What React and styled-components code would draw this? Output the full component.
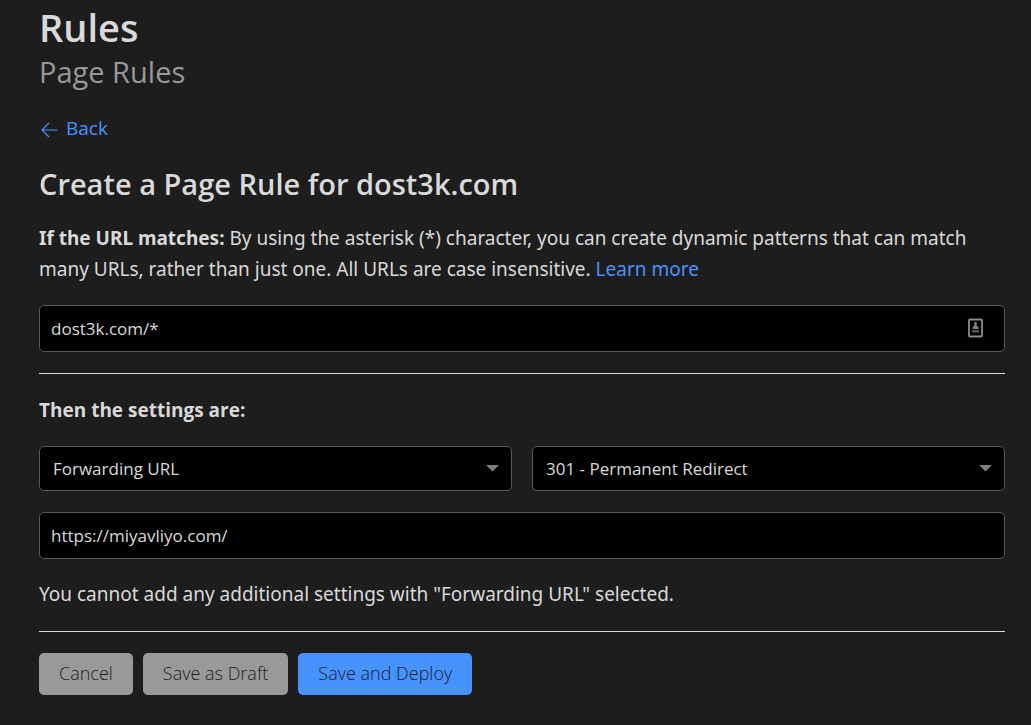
import React from 'react';
import styled, { createGlobalStyle } from 'styled-components';

const GlobalStyle = createGlobalStyle`
  * {
    box-sizing: border-box;
  }

  body {
    margin: 0;
    background: #1d1d1d;
    color: #d9d9d9;
    font-family: 'Segoe UI', 'Open Sans', 'Noto Sans', sans-serif;
    font-size: 19px;
    line-height: 31px;
  }
`;

const Page = styled.main`
  padding: 2px 26px 30px 39px;
`;

const Title = styled.h1`
  margin: 0;
  font-size: 38px;
  font-weight: 600;
  line-height: 50px;
`;

const Subtitle = styled.p`
  margin: 0;
  color: #999;
  font-size: 29px;
  line-height: 40px;
`;

const Link = styled.a`
  color: #4693ff;
  text-decoration: none;
`;

const BackLink = styled(Link)`
  display: inline-flex;
  align-items: center;
  gap: 7px;
  margin-top: 21px;
`;

const Heading = styled.h2`
  margin: 17px 0 19px;
  font-size: 29px;
  font-weight: 600;
  line-height: 40px;
`;

const Text = styled.p`
  margin: ${props => props.$top || '0'} 0 0;
  font-family: 'Segoe UI', 'Noto Sans', sans-serif;
`;

const Label = styled.label`
  font-weight: 700;
`;

const SettingsTitle = styled.h3`
  margin: 0 0 20px;
  font-size: 19px;
  font-weight: 700;
  line-height: 31px;
`;

const Field = styled.div`
  display: flex;
  align-items: center;
  height: 47px;
  margin-top: ${props => props.$top};
  padding-right: 20px;
  background: #000;
  border: 1px solid #595959;
  border-radius: 5px;
`;

const Input = styled.input`
  flex: 1;
  min-width: 0;
  height: 100%;
  padding: 0 11px;
  background: transparent;
  border: 0;
  outline: 0;
  color: #d9d9d9;
  font: inherit;
  font-size: 17px;
`;

const Divider = styled.hr`
  height: 1px;
  margin: 21px 0;
  background: #d9d9d9;
  border: 0;
`;

const Columns = styled.div`
  display: grid;
  grid-template-columns: 1fr 1fr;
  gap: 20px;
`;

const SelectBox = styled.div`
  display: grid;
  align-items: center;

  > * {
    grid-area: 1 / 1;
  }

  > svg {
    justify-self: end;
    margin-right: 13px;
    pointer-events: none;
  }
`;

const Select = styled.select`
  width: 100%;
  height: 45px;
  padding: 0 36px 0 13px;
  appearance: none;
  background: #000;
  border: 1px solid #595959;
  border-radius: 5px;
  outline: 0;
  color: #d9d9d9;
  font: inherit;
  font-size: 17px;
`;

const Actions = styled.div`
  display: flex;
  gap: 10px;
`;

const Button = styled.button`
  height: 42px;
  padding: 0 20px;
  background: ${props => (props.$primary ? '#4693ff' : '#999')};
  border: 0;
  border-radius: 5px;
  color: #1d1d1d;
  font: inherit;
  font-size: 18px;
  font-weight: 300;
`;

const ArrowLeft = () => (
  <svg width="20" height="18" viewBox="0 0 20 18" fill="none" stroke="currentColor" strokeWidth="1.2" aria-hidden="true">
    <path d="M18.500 10H2.500M10 3L3 10l7 7" />
  </svg>
);

const Caret = () => (
  <svg width="13" height="7" viewBox="0 0 13 7" fill="#7f7f7f" aria-hidden="true">
    <path d="M0 0h13L6.500 6.500z" />
  </svg>
);

const AutofillIcon = () => (
  <svg width="17" height="20" viewBox="0 0 17 20" fill="none" aria-hidden="true">
    <rect x="2" y="1.5" width="13" height="17" rx="1" stroke="#8c8c8c" strokeWidth="1.8" />
    <path d="M8.500 4c1 0 1.300.700 1.300 1.600v2.200l1.700 1.500V11h-6V9.300l1.700-1.500V5.600C7.200 4.700 7.500 4 8.500 4z" fill="#808080" />
    <path d="M5 12h7v2.500H5z" fill="#595959" />
  </svg>
);

export default () => (
  <>
    <GlobalStyle />
    <Page>
      <Title>Rules</Title>
      <Subtitle>Page Rules</Subtitle>
      <BackLink href="#back">
        <ArrowLeft />
        Back
      </BackLink>
      <Heading>Create a Page Rule for dost3k.com</Heading>
      <Text>
        <Label htmlFor="pattern">If the URL matches:</Label> By using the asterisk (*) character, you can
        create dynamic patterns that can match many URLs, rather than just one. All URLs are case
        insensitive. <Link href="#learn-more">Learn more</Link>
      </Text>
      <Field $top="20px">
        <Input id="pattern" type="text" defaultValue="dost3k.com/*" />
        <AutofillIcon />
      </Field>
      <Divider />
      <SettingsTitle>Then the settings are:</SettingsTitle>
      <Columns>
        <SelectBox>
          <Select aria-label="Setting" defaultValue="forwarding">
            <option value="forwarding">Forwarding URL</option>
          </Select>
          <Caret />
        </SelectBox>
        <SelectBox>
          <Select aria-label="Status code" defaultValue="301">
            <option value="301">301 - Permanent Redirect</option>
          </Select>
          <Caret />
        </SelectBox>
      </Columns>
      <Field $top="21px">
        <Input type="text" aria-label="Destination URL" defaultValue="https://miyavliyo.com/" />
      </Field>
      <Text $top="20px">You cannot add any additional settings with "Forwarding URL" selected.</Text>
      <Divider />
      <Actions>
        <Button type="button">Cancel</Button>
        <Button type="button">Save as Draft</Button>
        <Button type="submit" $primary>Save and Deploy</Button>
      </Actions>
    </Page>
  </>
);
